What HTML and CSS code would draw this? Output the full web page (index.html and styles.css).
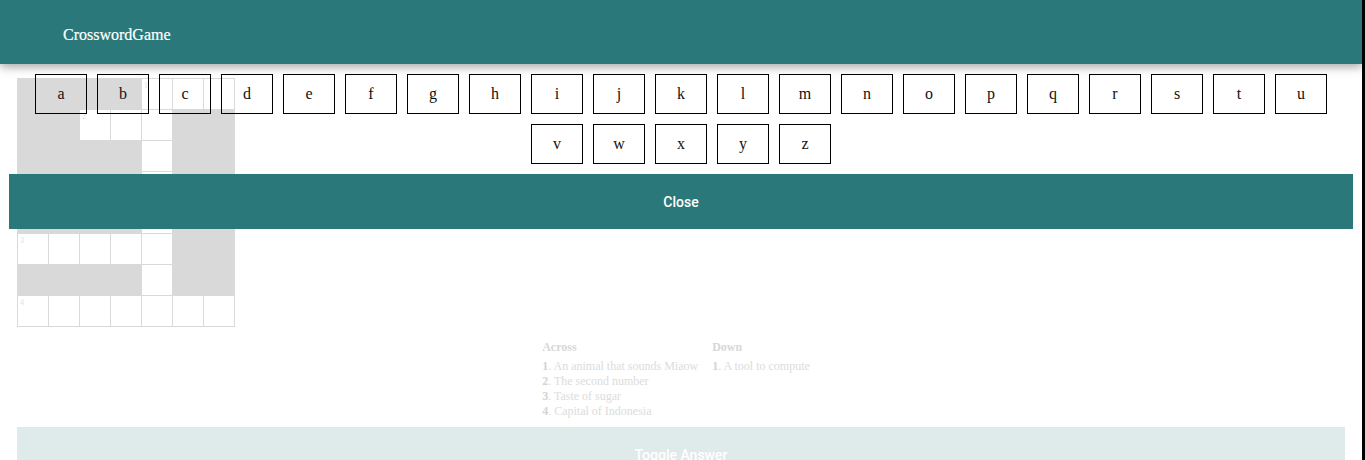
FILE: index.html
```html
<!DOCTYPE html>
<html>
<head>
<meta charset="utf-8">
<link rel="stylesheet" href="styles.css">
</head>
<body>
<header class="topbar"><span class="brand">CrosswordGame</span></header>

<main class="page">
  <table class="board">
    <tr><td class="blk"></td><td class="blk"></td><td class="blk"></td><td class="blk"></td><td class="cell"><span class="num">1</span></td><td class="cell"></td><td class="cell"></td></tr>
    <tr><td class="blk"></td><td class="blk"></td><td class="cell"><span class="num">2</span></td><td class="cell"></td><td class="cell"></td><td class="blk"></td><td class="blk"></td></tr>
    <tr><td class="blk"></td><td class="blk"></td><td class="blk"></td><td class="blk"></td><td class="cell"></td><td class="blk"></td><td class="blk"></td></tr>
    <tr><td class="blk"></td><td class="blk"></td><td class="blk"></td><td class="blk"></td><td class="cell"></td><td class="blk"></td><td class="blk"></td></tr>
    <tr><td class="blk"></td><td class="blk"></td><td class="blk"></td><td class="blk"></td><td class="cell"></td><td class="blk"></td><td class="blk"></td></tr>
    <tr><td class="cell"><span class="num">3</span></td><td class="cell"></td><td class="cell"></td><td class="cell"></td><td class="cell"></td><td class="blk"></td><td class="blk"></td></tr>
    <tr><td class="blk"></td><td class="blk"></td><td class="blk"></td><td class="blk"></td><td class="cell"></td><td class="blk"></td><td class="blk"></td></tr>
    <tr><td class="cell"><span class="num">4</span></td><td class="cell"></td><td class="cell"></td><td class="cell"></td><td class="cell"></td><td class="cell"></td><td class="cell"></td></tr>
  </table>

  <section class="clues">
    <div class="clue-col across">
      <h3 class="clue-head">Across</h3>
      <ul class="clue-list">
        <li><b>1</b>. An animal that sounds Miaow</li>
        <li><b>2</b>. The second number</li>
        <li><b>3</b>. Taste of sugar</li>
        <li><b>4</b>. Capital of Indonesia</li>
      </ul>
    </div>
    <div class="clue-col down">
      <h3 class="clue-head">Down</h3>
      <ul class="clue-list">
        <li><b>1</b>. A tool to compute</li>
      </ul>
    </div>
  </section>

  <button class="toggle">Toggle Answer</button>
</main>

<div class="modal">
  <div class="keys">
    <button class="key">a</button><button class="key">b</button><button class="key">c</button><button class="key">d</button><button class="key">e</button><button class="key">f</button><button class="key">g</button><button class="key">h</button><button class="key">i</button><button class="key">j</button><button class="key">k</button><button class="key">l</button><button class="key">m</button><button class="key">n</button><button class="key">o</button><button class="key">p</button><button class="key">q</button><button class="key">r</button><button class="key">s</button><button class="key">t</button><button class="key">u</button><button class="key">v</button><button class="key">w</button><button class="key">x</button><button class="key">y</button><button class="key">z</button>
  </div>
  <button class="close">Close</button>
</div>
</body>
</html>
```

FILE: styles.css
```css
html {
  background: #000;
}
body {
  margin: 0 3px 0 0;
  min-height: 100vh;
  background: #fff;
  position: relative;
  font-family: "Liberation Serif", "Times New Roman", serif;
}
.topbar {
  position: relative;
  z-index: 3;
  height: 64px;
  box-sizing: border-box;
  background: #2a7879;
  display: flex;
  align-items: center;
  padding: 5px 0 0 63px;
  box-shadow: 0 3px 9px rgba(0, 0, 0, 0.35);
}
.brand {
  color: #fff;
  font-size: 16px;
  -webkit-text-stroke: 0.2px #fff;
}
.page {
  padding: 14px 17px 0;
}
.board {
  border-collapse: collapse;
}
.board td {
  width: 30px;
  height: 30px;
  padding: 0;
  border: 1px solid #d9d9d9;
  vertical-align: top;
  text-align: left;
}
.board td.blk {
  background: #d9d9d9;
}
.num {
  display: block;
  font-size: 8px;
  line-height: 9px;
  color: #e2e2e2;
  padding: 2px 0 0 2px;
}
.clues {
  display: flex;
  justify-content: center;
  margin-top: 13px;
}
.clue-col.across {
  padding-right: 14px;
}
.clue-col.down {
  padding-right: 10px;
}
.clue-head {
  margin: 0 0 4px;
  font-size: 12px;
  line-height: 15px;
  font-weight: bold;
  color: #d7d7d7;
}
.clue-list {
  list-style: none;
  margin: 0;
  padding: 0;
  font-size: 12px;
  line-height: 15px;
  color: #dcdcdc;
}
.clue-list b {
  color: #d4d4d4;
}
.toggle {
  display: block;
  width: 100%;
  height: 55px;
  margin-top: 8px;
  border: 0;
  background: #dfeaea;
  color: #fff;
  font-family: Roboto, "Liberation Sans", sans-serif;
  font-weight: 500;
  font-size: 14px;
}
.modal {
  position: absolute;
  z-index: 2;
  top: 64px;
  left: 0;
  right: 0;
  padding: 10px 9px;
  display: flex;
  flex-direction: column;
  gap: 10px;
}
.keys {
  display: flex;
  flex-wrap: wrap;
  justify-content: center;
  gap: 10px;
}
.key {
  width: 52px;
  height: 40px;
  box-sizing: border-box;
  border: 1px solid #000;
  background: transparent;
  padding: 0;
  font-family: "Liberation Serif", "Times New Roman", serif;
  font-size: 16px;
  color: #111;
}
.close {
  height: 55px;
  border: 0;
  background: #2a7879;
  color: #fff;
  font-family: Roboto, "Liberation Sans", sans-serif;
  font-weight: 500;
  font-size: 14px;
}
```
